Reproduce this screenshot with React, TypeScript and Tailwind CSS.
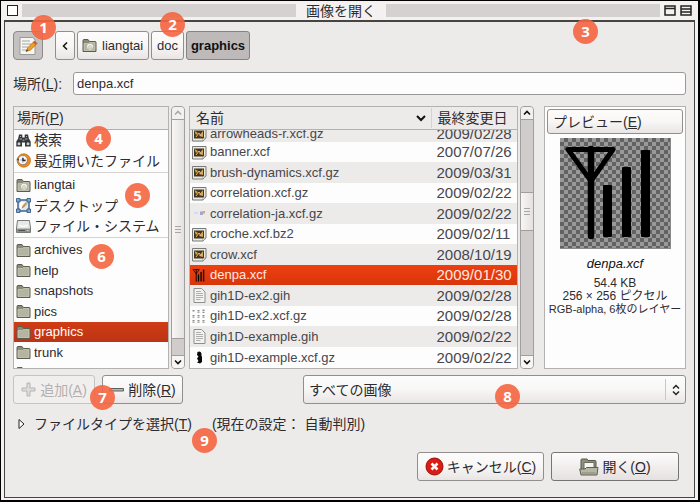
import React from 'react';

const jp = "font-['Liberation_Sans','Noto_Sans_CJK_JP',sans-serif]";
const raised = 'border border-[#918e8d] rounded-[3px] bg-linear-to-b from-[#fdfcfc] via-[#f8f7f6] to-[#e9e5e4]';

function FolderIcon({ home = false }: { home?: boolean }) {
  return (
    <svg width="15" height="15" viewBox="0 0 15 15" className="shrink-0" aria-hidden="true">
      <path d="M1 13.5V2.5Q1 1.5 2 1.5H6L7.5 3.5H13Q14 3.5 14 4.5V13.5Z" fill="#8b8c78" stroke="#5c5d50" />
      <path d="M2 5.5H6.5L7.5 4.5H13V12.5H2Z" fill="#b4b5a0" stroke="#d3d4c3" strokeWidth=".6" />
      {home && (
        <g>
          <circle cx="8" cy="8.8" r="3" fill="#f4f4ec" />
          <path d="M6 9L8 7L10 9V11H6Z" fill="#dcdccf" stroke="#a5a694" strokeWidth=".4" />
        </g>
      )}
    </svg>
  );
}

function SearchIcon() {
  return (
    <svg width="15" height="15" viewBox="0 0 15 15" className="shrink-0" aria-hidden="true">
      <path d="M3 1.5H6.300V4.5H8.700V1.5H12L12.8 5.5L14.7 8.5V13.5H9V9.500H6V13.5H.3V8.5L2.2 5.5Z" fill="#33363a" />
      <path d="M4 3.5H5M10 3.5H11M3.5 6H6M9 6H11.5" stroke="#aab0b4" />
      <circle cx="3" cy="10.7" r="1.5" fill="#c9ced2" />
      <circle cx="12" cy="10.7" r="1.5" fill="#c9ced2" />
      <path d="M6.5 6.5H8.5V8H6.5Z" fill="#888d91" />
    </svg>
  );
}

function RecentIcon() {
  return (
    <svg width="15" height="15" viewBox="0 0 15 15" className="shrink-0" aria-hidden="true">
      <circle cx="7.8" cy="7.5" r="6.7" fill="#ef8a1d" stroke="#b9650f" strokeWidth=".7" />
      <circle cx="6.8" cy="7" r="4.7" fill="#f8f8f6" stroke="#716d68" strokeWidth=".7" />
      <path d="M6.8 3.5V10M3.8 7H10" stroke="#8f8f8f" strokeWidth=".7" />
      <path d="M7 5V7.5H9.5" stroke="#252525" strokeWidth="1.3" fill="none" />
      <path d="M.3 6L3 5.3L3 8Z" fill="#555" />
    </svg>
  );
}

function DesktopIcon() {
  return (
    <svg width="15" height="15" viewBox="0 0 15 15" className="shrink-0" aria-hidden="true">
      <rect x="2" y="2" width="11" height="11" fill="#dfe7f0" stroke="#3f648f" strokeWidth="1.5" />
      <path d="M4 4H9L5 11H4Z" fill="#fff" />
      <path d="M6 10L7 7.5L10 4.5L11 5.5L8 9Z" fill="#e99a35" stroke="#9c6629" strokeWidth=".4" />
      <path d="M.5.5H4V4H.5ZM11 .5H14.5V4H11ZM.5 11H4V14.5H.5ZM11 11H14.5V14.5H11Z" fill="#86a7cc" stroke="#274f80" strokeWidth=".8" />
    </svg>
  );
}

function DriveIcon() {
  return (
    <svg width="15" height="15" viewBox="0 0 15 15" className="shrink-0" aria-hidden="true">
      <path d="M1.5 1.5H13.5L14.5 9V13.5H.5V9Z" fill="#e8e9e7" stroke="#777a78" />
      <path d="M1 9.5H14V13H1Z" fill="#8d908d" />
      <path d="M3.5 6Q7.5 9 11.5 6" fill="none" stroke="#fff" strokeWidth="1.5" />
      <path d="M2.5 11.5H9" stroke="#4b4e4b" />
      <path d="M11 11.5H12.5" stroke="#d9dbd8" />
    </svg>
  );
}

function Antenna({ size }: { size: string }) {
  return (
    <svg viewBox="0 0 110 110" className={`${size} shrink-0`} aria-hidden="true">
      <path d="M8 11.5H53L31 43Z" fill="none" stroke="#000" strokeWidth="5" strokeLinejoin="round" />
      <path d="M31 11V98" stroke="#000" strokeWidth="6.5" strokeLinecap="round" />
      <path d="M44 48H51V98H44ZM63 30H70V98H63ZM82 13H89V98H82Z" fill="#000" stroke="#000" strokeWidth="2" strokeLinejoin="round" />
    </svg>
  );
}

type Kind = 'image' | 'text' | 'antenna' | 'faint' | 'digits' | 'figure';

function FileIcon({ kind }: { kind: Kind }) {
  if (kind === 'antenna') return <Antenna size="size-[15px]" />;
  return (
    <svg width="15" height="15" viewBox="0 0 15 15" className="shrink-0" aria-hidden="true">
      {kind === 'image' && (
        <g>
          <path d="M.5 1.5H14V11L11 14H.5Z" fill="#e9e9e6" stroke="#777a77" />
          <path d="M2 3.5H12V11.5H2Z" fill="#423523" />
          <path d="M2.5 4L6 6L4 8ZM7 9L11 4V10Z" fill="#d9a94e" />
          <path d="M4 10L7 6L9 9" fill="none" stroke="#f0c069" />
          <path d="M11 14V11.2H14Z" fill="#fff" stroke="#777a77" strokeWidth=".6" />
        </g>
      )}
      {kind === 'text' && (
        <g>
          <path d="M2 .5H9.5L13 4V14.5H2Z" fill="#f3f3f2" stroke="#8e908d" />
          <path d="M4 3.5H9M4 5.5H11M4 7.5H11M4 9.5H11M4 11.5H8.5" stroke="#adb0ad" />
        </g>
      )}
      {kind === 'faint' && (
        <g>
          <path d="M2 6H6V8H2Z" fill="#d5daf2" />
          <path d="M8 5.5H11V9H8Z" fill="#98a9d8" />
          <path d="M10.5 5H13V7.5H10.5Z" fill="#e5a173" />
        </g>
      )}
      {kind === 'digits' && (
        <path d="M1.5 1V3M6.5 1V4M11.5 .5V4M1.5 6V9M6.5 6V9M11.5 6V9M1.5 11V14M6.5 11V14M11.5 11V14" stroke="#8d8d8d" strokeWidth="2" strokeDasharray="1.5 .7" />
      )}
      {kind === 'figure' && (
        <path d="M5.5 2Q8.5 .5 9.500 3.500Q9 5 10 7V12L8 13.5L5 12.5L6.500 11L5 8.5L6.500 6.5L5 5Z" fill="#080808" />
      )}
    </svg>
  );
}

function Arrow({ up = false, dim = false }: { up?: boolean; dim?: boolean }) {
  return (
    <svg width="8" height="6" viewBox="0 0 8 6" aria-hidden="true">
      <path d={up ? 'M1 4.5L4 1.5L7 4.5' : 'M1 1.5L4 4.5L7 1.5'} fill="none" stroke={dim ? '#aaa7a6' : '#111'} strokeWidth="1.6" />
    </svg>
  );
}

function Grip() {
  return (
    <span className="flex flex-col gap-[2px]">
      <i className="h-px w-[6px] bg-[#aaa6a5]" />
      <i className="h-px w-[6px] bg-[#aaa6a5]" />
      <i className="h-px w-[6px] bg-[#aaa6a5]" />
    </span>
  );
}

function ScrollBar({ side }: { side: 'places' | 'files' }) {
  const places = side === 'places';
  const thumb = 'flex items-center justify-center border-y border-[#a19e9d] bg-linear-to-r from-[#f8f6f5] to-[#e5e1e0]';
  return (
    <div className="flex w-[14px] shrink-0 flex-col overflow-hidden rounded-[4px] border border-[#a19e9d] bg-[#d0cccb]">
      <button type="button" aria-label="上へ" className="flex h-3 shrink-0 items-center justify-center bg-[#f3f1f0]">
        <Arrow up dim={places} />
      </button>
      {places ? (
        <>
          <div className={`${thumb} grow`}><Grip /></div>
          <div className="h-[16px]" />
        </>
      ) : (
        <>
          <div className="h-[73px] border-t border-[#a19e9d]" />
          <div className={`${thumb} h-[39px]`}><Grip /></div>
          <div className="grow" />
        </>
      )}
      <button type="button" aria-label="下へ" className="flex h-[13px] shrink-0 items-center justify-center border-t border-[#a19e9d] bg-[#f8f6f5]">
        <Arrow />
      </button>
    </div>
  );
}

function Place({ icon, label, selected = false }: { icon: React.ReactNode; label: string; selected?: boolean }) {
  return (
    <li className={`flex shrink-0 odd:h-5 even:h-[21px] ${selected ? 'bg-linear-to-b from-[#d03c15] to-[#bd3414] text-white' : ''}`}>
      <button type="button" className="flex w-full items-center gap-[3px] pl-[2px] text-left whitespace-nowrap">
        {icon}
        {label}
      </button>
    </li>
  );
}

const files: [string, string, Kind][] = [
  ['arrowheads-r.xcf.gz', '2009/02/28', 'image'],
  ['banner.xcf', '2007/07/26', 'image'],
  ['brush-dynamics.xcf.gz', '2009/03/31', 'image'],
  ['correlation.xcf.gz', '2009/02/22', 'image'],
  ['correlation-ja.xcf.gz', '2009/02/22', 'faint'],
  ['croche.xcf.bz2', '2009/02/11', 'image'],
  ['crow.xcf', '2008/10/19', 'image'],
  ['denpa.xcf', '2009/01/30', 'antenna'],
  ['gih1D-ex2.gih', '2009/02/28', 'text'],
  ['gih1D-ex2.xcf.gz', '2009/02/28', 'digits'],
  ['gih1D-example.gih', '2009/02/22', 'text'],
  ['gih1D-example.xcf.gz', '2009/02/22', 'figure'],
];

function rowHeight(i: number) {
  if (i === 0) return 'h-[12px] items-end leading-4';
  return i % 2 === 0 || i === files.length - 1 ? 'h-[21px] items-center leading-5' : 'h-5 items-center leading-5';
}

function FileTable() {
  return (
    <table className="min-w-0 grow border-collapse self-start border border-[#b5b1b0] bg-[#fefdfd]">
      <thead>
        <tr className="h-[23px] border-b border-[#b5b1b0] bg-[#edebea] text-left text-sm">
          <th className="p-0 font-normal">
            <button type="button" className="flex w-full items-center justify-between border-r border-[#d6d2d1] pr-[5px] pl-[6px] leading-5">
              名前
              <svg width="10" height="7" viewBox="0 0 10 7" aria-hidden="true">
                <path d="M1 1L5 5L9 1" fill="none" stroke="#111" strokeWidth="2" />
              </svg>
            </button>
          </th>
          <th className="w-[86px] p-0 pl-[6px] leading-5 font-normal">最終変更日</th>
        </tr>
      </thead>
      <tbody>
        {files.map(([name, date, kind], i) => (
          <tr
            key={name}
            className={kind === 'antenna' ? 'bg-linear-to-b from-[#ee3f10] to-[#d8360b] text-[#ffe9e2]' : i % 2 === 0 ? 'bg-[#ecebea] text-[#48464b]' : 'text-[#48464b]'}
          >
            <td className="p-0">
              <div className={`flex gap-[3px] overflow-hidden pl-[2px] ${rowHeight(i)}`}>
                <FileIcon kind={kind} />
                <span>{name}</span>
              </div>
            </td>
            <td className="p-0">
              <div className={`flex overflow-hidden pl-[5px] text-[15px] ${rowHeight(i)}`}>
                <span>{date}</span>
              </div>
            </td>
          </tr>
        ))}
      </tbody>
    </table>
  );
}

function Badge({ n, place }: { n: number; place: string }) {
  return (
    <span className={`absolute flex size-[25px] items-center justify-center rounded-full bg-[#f46540]/90 font-['Open_Sans',sans-serif] text-[15px] font-bold text-white ${place}`}>
      {n}
    </span>
  );
}

export default function App() {
  return (
    <div className={`relative flex min-h-screen flex-col border border-r-2 border-b-2 border-black bg-[#f5f1f1] pr-[3px] pb-[2px] pl-[3px] text-[13px] text-[#2d2b2e] ${jp}`}>
      <header className="flex h-[19px] shrink-0 items-center gap-[4px] px-[3px]">
        <button type="button" aria-label="閉じる" className="size-[11px] shrink-0 border border-[#222] bg-white" />
        <span className="h-[13px] grow bg-[#d5d1d0]" />
        <h1 className="px-[6px] text-sm leading-[18px]">画像を開く</h1>
        <span className="h-[13px] grow bg-[#d5d1d0]" />
        <button type="button" aria-label="最大化">
          <svg width="12" height="11" viewBox="0 0 12 11"><path d="M1 1H11V10H1ZM1 3.5H11" fill="none" stroke="#222" strokeWidth="1.5" /></svg>
        </button>
        <button type="button" aria-label="しまう">
          <svg width="12" height="11" viewBox="0 0 12 11"><path d="M1 1H11V10H1ZM1 4H11M1 7H11" fill="none" stroke="#222" strokeWidth="1.5" /></svg>
        </button>
      </header>

      <main className="flex grow flex-col border border-t-2 border-[#464542] bg-[#edebea] pt-[9px] pr-[8px] pb-[16px] pl-[8px]">
        <nav className="flex h-[29px] gap-[2px]">
          <button type="button" aria-label="ファイル名を入力" className="mr-[10px] flex w-[30px] items-center justify-center rounded-[4px] border border-[#8d8a89] bg-[#c4c1c0]">
            <svg width="20" height="20" viewBox="0 0 20 20">
              <path d="M2 1.5H15L17 4V18.5H2Z" fill="#f6f6f4" stroke="#989a95" />
              <path d="M4 5H12M4 8H13M4 11H10M4 14H9" stroke="#a4a6a3" />
              <path d="M8 15.5L10 11.5L16.5 5L19 7.5L12.5 14Z" fill="#f4a11d" stroke="#a8651a" strokeWidth=".8" />
              <path d="M16.5 5L19 7.5L17.5 9L15 6.5Z" fill="#d6553e" />
              <path d="M8 15.5L9 13.5L10 14.5Z" fill="#222" />
            </svg>
          </button>
          <button type="button" aria-label="戻る" className={`flex w-[20px] items-center justify-center ${raised}`}>
            <svg width="6" height="8" viewBox="0 0 6 8"><path d="M5 .5L1.5 4L5 7.5" fill="none" stroke="#111" strokeWidth="1.5" /></svg>
          </button>
          <button type="button" className={`flex w-[72px] items-center gap-[5px] pl-[4px] ${raised}`}>
            <FolderIcon home />
            liangtai
          </button>
          <button type="button" className={`w-[33px] ${raised}`}>doc</button>
          <button type="button" className="w-[64px] rounded-[3px] border border-[#858281] bg-[#bdbab9] font-bold text-[#111]">graphics</button>
        </nav>

        <div className="mt-[12px] flex items-center">
          <label htmlFor="location" className="w-[60px] text-sm leading-5">場所(<u>L</u>):</label>
          <input id="location" defaultValue="denpa.xcf" className="h-[23px] min-w-0 grow rounded-[3px] border border-[#9b9897] bg-[#fefdfd] px-[3px]" />
        </div>

        <div className="mt-[11px] flex h-[263px]">
          <section className="flex w-[156px] shrink-0 flex-col overflow-hidden border border-[#b5b1b0] bg-[#fefdfd]">
            <h2 className="h-[23px] shrink-0 border-b border-[#b5b1b0] bg-[#edebea] pl-[3px] text-sm leading-[22px]">場所(<u>P</u>)</h2>
            <ul className="flex flex-col text-sm">
              <Place icon={<SearchIcon />} label="検索" />
              <Place icon={<RecentIcon />} label="最近開いたファイル" />
            </ul>
            <ul className="mt-px flex flex-col border-t border-[#d5d2d1] pt-[2px] text-sm">
              <li className="flex h-5 shrink-0 text-[13px]">
                <button type="button" className="flex items-center gap-[3px] pl-[2px]"><FolderIcon home />liangtai</button>
              </li>
              <Place icon={<DesktopIcon />} label="デスクトップ" />
              <Place icon={<DriveIcon />} label="ファイル・システム" />
            </ul>
            <ul className="mt-px flex flex-col border-t border-[#d5d2d1] pt-[2px]">
              <Place icon={<FolderIcon />} label="archives" />
              <Place icon={<FolderIcon />} label="help" />
              <Place icon={<FolderIcon />} label="snapshots" />
              <Place icon={<FolderIcon />} label="pics" />
              <Place icon={<FolderIcon />} label="graphics" selected />
              <Place icon={<FolderIcon />} label="trunk" />
              <li className="flex h-5 shrink-0 items-center pl-[2px]"><FolderIcon /></li>
            </ul>
          </section>
          <div className="ml-[2px] flex"><ScrollBar side="places" /></div>
          <div className="ml-[4px] flex min-w-0 grow"><FileTable /></div>
          <div className="ml-[2px] flex"><ScrollBar side="files" /></div>

          <section className="ml-[10px] flex w-[142px] shrink-0 flex-col items-center border border-[#b5b1b0] bg-[#fefdfd] p-[2px]">
            <button type="button" className={`h-[25px] w-full shrink-0 pl-[5px] text-left text-sm leading-5 ${raised}`}>プレビュー(<u>E</u>)</button>
            <div className="mt-[4px] size-[111px] shrink-0 border-r border-b border-[#888] bg-[repeating-conic-gradient(#626262_0_25%,#999_0_50%)] bg-size-[8px_8px]">
              <Antenna size="size-[110px]" />
            </div>
            <p className="mt-[5px] leading-5 text-[#111] italic">denpa.xcf</p>
            <p className="mt-[3px] text-center text-[12px] leading-[13px] whitespace-nowrap">
              54.4 KB<br />256 × 256 ピクセル<br /><span className="text-[11px]">RGB-alpha, 6枚のレイヤー</span>
            </p>
          </section>
        </div>

        <div className="mt-[6px] flex h-[29px] gap-[7px] text-sm">
          <button type="button" disabled className="flex w-[82px] items-center justify-center gap-[4px] rounded-[3px] border border-[#c6c2c1] bg-[#f1efee] text-[#b4b0af]">
            <svg width="15" height="15" viewBox="0 0 15 15" aria-hidden="true"><path d="M6 1H9V6H14V9H9V14H6V9H1V6H6Z" fill="#dedbda" stroke="#b7b3b2" /></svg>
            <span>追加(<u>A</u>)</span>
          </button>
          <button type="button" className={`flex w-[81px] items-center justify-center gap-[4px] ${raised}`}>
            <svg width="15" height="15" viewBox="0 0 15 15" aria-hidden="true"><path d="M.5 6.5H14.5V9H.5Z" fill="#b5b7b3" stroke="#5e605d" /></svg>
            <span>削除(<u>R</u>)</span>
          </button>
          <div className="relative ml-[113px] flex min-w-0 grow">
            <select aria-label="ファイルの種類" className={`w-full appearance-none px-[5px] ${raised}`}>
              <option>すべての画像</option>
            </select>
            <span className="pointer-events-none absolute inset-y-[4px] right-0 flex w-[21px] items-center justify-center border-l border-[#cbc7c6]">
              <svg width="8" height="12" viewBox="0 0 8 12" aria-hidden="true"><path d="M1 4.5L4 1.5L7 4.5M1 7.5L4 10.5L7 7.5" fill="none" stroke="#222" strokeWidth="1.5" /></svg>
            </span>
          </div>
        </div>

        <button type="button" className="mt-[10px] flex items-center self-start pl-[5px] text-sm leading-5">
          <svg width="7" height="12" viewBox="0 0 7 12" aria-hidden="true"><path d="M1 1.5L6 6L1 10.5Z" fill="#fff" stroke="#222" /></svg>
          <span className="ml-[9px]">ファイルタイプを選択(<u>T</u>)</span>
          <span className="ml-[20px]">(現在の設定： 自動判別)</span>
        </button>

        <footer className="mt-auto flex h-[29px] justify-end gap-[7px] pr-[7px] text-sm">
          <button type="button" className={`flex w-[127px] items-center justify-center gap-[3px] ${raised}`}>
            <svg width="19" height="19" viewBox="0 0 19 19" aria-hidden="true">
              <circle cx="9.5" cy="9.5" r="8.5" fill="#dc1c12" stroke="#930f0b" />
              <path d="M6.5 6.5L12.5 12.5M12.5 6.5L6.5 12.5" stroke="#fff" strokeWidth="2.5" />
            </svg>
            <span>キャンセル(<u>C</u>)</span>
          </button>
          <button type="button" className="flex w-[128px] items-center justify-center gap-[3px] rounded-[3px] border border-[#777473] bg-linear-to-b from-[#fdfcfc] to-[#e5e1e0]">
            <svg width="20" height="18" viewBox="0 0 20 18" aria-hidden="true">
              <path d="M2 15V2Q2 1 3 1H8L9 2.5H16Q17 2.5 17 4V15Z" fill="#8f917e" stroke="#55574b" />
              <path d="M5 4.5H15V11H5Z" fill="#f5f5f2" stroke="#6b6d60" />
              <path d="M.7 11H6L7.5 9.5H19L18 17H2Z" fill="#b5b7a4" stroke="#5d5f52" />
              <path d="M3 15H16.5" stroke="#878976" />
            </svg>
            <span>開く(<u>O</u>)</span>
          </button>
        </footer>
      </main>

      <Badge n={1} place="top-[14px] left-[30px]" />
      <Badge n={2} place="top-[11px] left-[159px]" />
      <Badge n={3} place="top-[18px] right-[100px]" />
      <Badge n={4} place="top-[125px] left-[85px]" />
      <Badge n={5} place="top-[182px] left-[124px]" />
      <Badge n={6} place="top-[243px] left-[88px]" />
      <Badge n={7} place="top-[384px] left-[89px]" />
      <Badge n={8} place="top-[383px] right-[178px]" />
      <Badge n={9} place="top-[427px] left-[191px]" />
    </div>
  );
}
